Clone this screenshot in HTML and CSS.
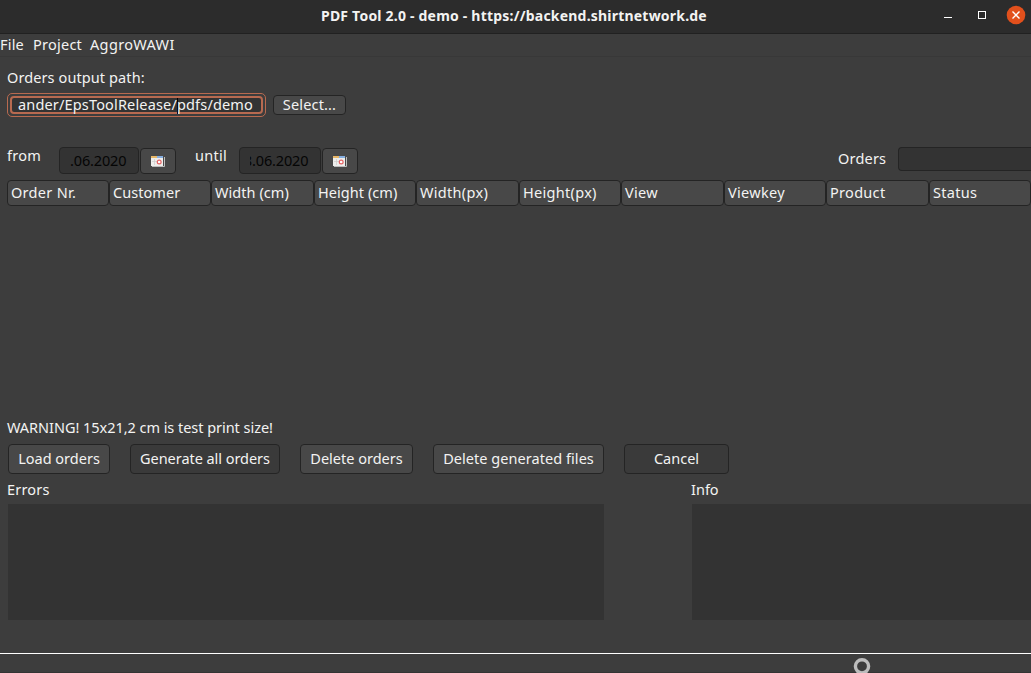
FILE: index.html
```
<!DOCTYPE html>
<html lang="en">
<head>
<meta charset="utf-8">
<title>PDF Tool 2.0</title>
<link rel="stylesheet" href="styles.css">
</head>
<body>
<div class="window">
  <header class="titlebar">
    <h1 class="title">PDF Tool 2.0 - demo - https://backend.shirtnetwork.de</h1>
    <svg class="controls" width="91" height="32" viewBox="0 0 91 32">
      <path d="M4 17.500h8" stroke="#fff"/>
      <rect x="38.500" y="11.500" width="7" height="7" fill="none" stroke="#fff"/>
      <circle cx="76" cy="15" r="9.300" fill="#e2501c"/>
      <path d="M72.500 11.500l7 7M79.500 11.500l-7 7" stroke="#fff" stroke-width="1.400"/>
    </svg>
  </header>
  <nav class="menubar"><span class="m-file">File</span><span class="m-project">Project</span><span class="m-aggro">AggroWAWI</span></nav>
  <main class="content">
    <div class="label path-label">Orders output path:</div>
    <div class="path-row">
      <div class="focus-ring"><div class="path-input"><span>ander/EpsToolRelease/</span><i class="caret"></i><span>pdfs/demo</span></div></div>
      <div class="button select">Select...</div>
    </div>
    <div class="filter-row">
      <span class="from">from</span>
      <div class="field date-from"><span class="date">.06.2020</span></div>
      <div class="button calendar"><svg width="14" height="11" viewBox="0 0 14 11"><path d="M1 10.500h12.500V1" fill="none" stroke="#bcbcbc"/><rect y="1" width="12" height="9" fill="#eeeeec"/><path d="M0 1h6" stroke="#e8b768" stroke-width="2"/><path d="M6 1h6" stroke="#86aee0" stroke-width="2"/><path d="M3.500 3v6M1 5.500h5" stroke="#ccc" stroke-width=".7"/><circle cx="8.200" cy="6" r="1.900" fill="#fff" stroke="#e66464" stroke-width="1.200"/></svg></div>
      <span class="until">until</span>
      <div class="field date-until"><span class="clip">8</span><span class="date">.06.2020</span></div>
      <div class="button calendar"><svg width="14" height="11" viewBox="0 0 14 11"><path d="M1 10.500h12.500V1" fill="none" stroke="#bcbcbc"/><rect y="1" width="12" height="9" fill="#eeeeec"/><path d="M0 1h6" stroke="#e8b768" stroke-width="2"/><path d="M6 1h6" stroke="#86aee0" stroke-width="2"/><path d="M3.500 3v6M1 5.500h5" stroke="#ccc" stroke-width=".7"/><circle cx="8.200" cy="6" r="1.900" fill="#fff" stroke="#e66464" stroke-width="1.200"/></svg></div>
      <span class="orders">Orders</span>
      <div class="field orders-field"></div>
    </div>
    <div class="table-head">
      <div class="th t-nr">Order Nr.</div><div class="th">Customer</div><div class="th">Width (cm)</div><div class="th">Height (cm)</div><div class="th t-px">Width(px)</div><div class="th t-px">Height(px)</div><div class="th t-px">View</div><div class="th t-px">Viewkey</div><div class="th t-px">Product</div><div class="th t-px">Status</div>
    </div>
    <div class="table-body"></div>
    <div class="label warning">WARNING! 15x21,2 cm is test print size!</div>
    <div class="actions">
      <div class="button b-load">Load orders</div>
      <div class="button b-generate dim">Generate all orders</div>
      <div class="button b-delete">Delete orders</div>
      <div class="button b-files">Delete generated files</div>
      <div class="button b-cancel dim">Cancel</div>
    </div>
    <div class="logs">
      <section class="log errors"><div class="label l-errors">Errors</div><div class="log-box"></div></section>
      <section class="log info"><div class="label">Info</div><div class="log-box"></div></section>
    </div>
  </main>
  <footer class="statusbar"><svg width="20" height="19" viewBox="0 0 20 19"><circle cx="10" cy="12.300" r="6.600" fill="none" stroke="#bdbdbd" stroke-width="3.400"/></svg></footer>
</div>
</body>
</html>
```
FILE: styles.css
```
* { box-sizing: border-box; }
body {
  margin: 0;
  background: #3d3d3d;
  color: #f3f3f2;
  font: 14.5px/20px "Noto Sans", sans-serif;
  white-space: nowrap;
  overflow: hidden;
}
.window { display: flex; flex-direction: column; width: 1031px; height: 673px; overflow: hidden; }
.titlebar {
  display: grid;
  grid-template-columns: 321px 1fr 91px;
  height: 34px;
  background: #2c2c2c;
  border-bottom: 1px solid #212121;
}
.title { grid-column: 2; margin: 0; padding-top: 6px; font-size: 14px; line-height: 20px; font-weight: 700; letter-spacing: .21px; }
.menubar { display: flex; height: 23px; border-bottom: 1px solid #383838; }
.m-file { width: 33px; letter-spacing: .2px; }
.m-project { width: 57px; letter-spacing: .25px; }
.m-aggro { letter-spacing: .35px; }
.content { height: 596px; padding-left: 7px; }
.label { height: 20px; }
.path-label { margin-top: 10px; letter-spacing: .1px; }
.path-row { display: flex; gap: 7px; margin-top: 6px; height: 24px; }
.focus-ring { width: 259px; height: 24px; padding: 2px; border: 1px solid #b86a50; border-radius: 5px; }
.path-input {
  display: flex;
  height: 18px;
  padding-left: 6px;
  border: 2px solid #b86a50;
  border-radius: 4px;
  background: #333;
  line-height: 12px;
  letter-spacing: .16px;
}
.caret { width: 1px; height: 16px; margin-right: -1px; background: #000; }
.button {
  display: flex;
  align-items: center;
  justify-content: center;
  padding-bottom: 2px;
  border: 1px solid #242424;
  border-radius: 4px;
  background: #484848;
}
.dim { background: #3a3a3a; }
.select { width: 73px; height: 20px; margin-top: 2px; letter-spacing: .15px; }
.filter-row { display: flex; height: 63px; padding-top: 29px; }
.from { width: 52px; margin-top: -1px; letter-spacing: .25px; }
.field { height: 27px; margin-top: 1px; border: 1px solid #242424; border-radius: 4px; background: #333; color: #050505; }
.date { letter-spacing: -.15px; }
.date-from { width: 80px; padding: 2px 0 0 10px; }
.calendar { width: 36px; height: 26px; margin: 2px 0 0 1px; padding: 0; }
.until { width: 44px; margin: -1px 0 0 19px; letter-spacing: .25px; }
.date-until { display: flex; width: 82px; padding: 2px 0 0 10px; }
.clip { display: flex; justify-content: flex-end; width: 2px; overflow: hidden; }
.orders { width: 60px; margin: 2px 0 0 480px; letter-spacing: .2px; }
.orders-field { flex: 1; height: 24px; border-right: 0; border-radius: 4px 0 0 4px; }
.table-head { display: grid; grid-template-columns: 102px 102px 103px 102px 103px 102px 103px 102px 103px 102px; height: 26px; }
.th { padding: 1px 3px; border: 1px solid #242424; border-radius: 4px; background: #484848; letter-spacing: .05px; }
.t-nr, .t-px { letter-spacing: .3px; }
.table-body { height: 211px; }
.warning { letter-spacing: -.04px; }
.actions { display: flex; gap: 20px; margin: 7px 0 0 1px; height: 30px; }
.b-load { width: 102px; }
.b-generate { width: 150px; letter-spacing: -.05px; }
.b-delete { width: 113px; }
.b-files { width: 171px; letter-spacing: .05px; }
.b-cancel { width: 105px; }
.logs { display: flex; justify-content: space-between; padding-top: 5px; }
.log-box { height: 116px; margin: 5px 0 0 1px; background: #333; }
.errors { width: 597px; }
.l-errors { letter-spacing: .2px; }
.info { width: 340px; }
.statusbar { height: 20px; padding-left: 852px; border-top: 1px solid #fff; border-bottom: 1px solid #343434; }
.statusbar svg { display: block; }
```
